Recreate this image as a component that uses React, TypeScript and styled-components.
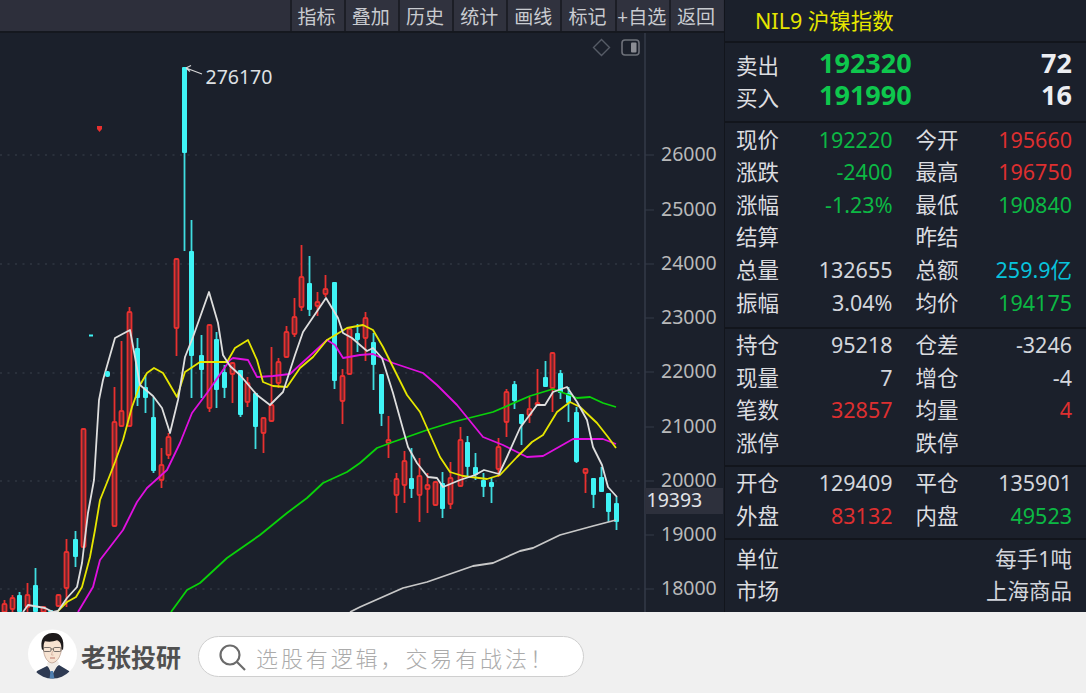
import styled, { createGlobalStyle } from 'styled-components';

// Layout constants
const CHART_WIDTH = 724;
const PAGE_WIDTH = 1086;
const TOP_HEIGHT = 612;
const PLOT_RIGHT = 645;

const UP = '#e8302f';
const DOWN = '#3ff3f5';

const FONT = `"Noto Sans", "Noto Sans CJK SC", sans-serif`;

const GlobalStyle = createGlobalStyle`
  html, body {
    margin: 0;
    padding: 0;
    background: #f0f0f0;
  }
`;

const Page = styled.div`
  width: ${PAGE_WIDTH}px;
  height: 693px;
  display: flex;
  flex-direction: column;
  overflow: hidden;
  font-family: ${FONT};
`;

const Terminal = styled.div`
  height: ${TOP_HEIGHT}px;
  display: flex;
  background: #1b202b;
`;

const ChartColumn = styled.div`
  width: ${CHART_WIDTH}px;
  display: flex;
  flex-direction: column;
`;

const Toolbar = styled.div`
  height: 31px;
  display: flex;
  justify-content: flex-end;
  gap: 2px;
  padding-right: 1px;
  background: #2d2f3b;
  border-bottom: 2px solid #15181f;
`;

const ToolButton = styled.div`
  width: 52.2px;
  box-sizing: border-box;
  padding-right: 2px;
  display: flex;
  align-items: center;
  justify-content: center;
  white-space: nowrap;
  background: #30323e;
  color: #c9cbd0;
  font-size: 19px;
  box-shadow: -2px 0 0 #1c1e26;
`;

const ChartArea = styled.div`
  position: relative;
  flex: 1;
`;

const ChartSvg = styled.svg`
  display: block;
  width: 100%;
  height: 100%;
`;

const PriceTag = styled.div`
  position: absolute;
  left: ${PLOT_RIGHT}px;
  top: 455px;
  width: 78px;
  height: 26px;
  display: flex;
  align-items: center;
  padding: 0 0 3px 1.5px;
  box-sizing: border-box;
  background: #2d303c;
  color: #e2e4e8;
  font-size: 19.5px;
  line-height: 1;
`;

const QuotePanel = styled.div`
  flex: 1;
  display: flex;
  flex-direction: column;
  border-left: 1px solid #12151c;
  color: #dcdde0;
`;

const PanelTitle = styled.div`
  height: 41px;
  box-sizing: border-box;
  display: flex;
  align-items: center;
  padding: 0 0 3px 30px;
  color: #e6e600;
  font-size: 21.5px;
  white-space: pre;
`;

const Section = styled.div<{ $top: number; $bottom: number }>`
  padding: ${p => p.$top}px 14px ${p => p.$bottom}px 11px;
  border-top: 2px solid #12151c;
`;

const DepthRow = styled.div`
  height: 32.5px;
  display: flex;
  align-items: center;
  line-height: 1;
`;

const DepthLabel = styled.span`
  width: 83px;
  padding-top: 6px;
  font-size: 21.5px;
`;

const DepthPrice = styled.span`
  flex: 1;
  font-size: 27px;
  font-weight: 700;
  color: #0ec74d;
`;

const DepthVolume = styled.span`
  font-size: 27px;
  font-weight: 700;
  color: #eceef2;
`;

const QuoteRow = styled.div`
  height: 32.6px;
  display: flex;
  gap: 23px;
  align-items: center;
  line-height: 1;
`;

const Pair = styled.div`
  flex: 1;
  display: flex;
  justify-content: space-between;
  align-items: center;
`;

const Label = styled.span`
  font-size: 21.5px;
  color: #dcdde0;
`;

const Value = styled.span<{ $color?: string }>`
  font-size: 21.5px;
  color: ${p => p.$color || '#d3d6dc'};
`;

const Footer = styled.div`
  flex: 1;
  display: flex;
  align-items: center;
  padding: 0 0 0 28px;
  background: #f0f0f0;
`;

const Avatar = styled.svg`
  width: 49px;
  height: 50px;
  flex: none;
  margin-top: 2px;
`;

const Brand = styled.span`
  width: 117px;
  margin: 6px 0 0 4px;
  font-size: 25px;
  font-weight: 700;
  color: #505050;
  white-space: nowrap;
`;

const SearchBox = styled.div`
  width: 386px;
  height: 41px;
  box-sizing: border-box;
  display: flex;
  align-items: center;
  gap: 9px;
  padding-left: 19px;
  background: #fff;
  border: 1px solid #cfcfcf;
  border-radius: 21px;
  margin-top: 8px;
`;

const SearchText = styled.span`
  font-size: 22px;
  letter-spacing: 2.9px;
  font-weight: 300;
  color: #ababab;
  white-space: nowrap;
`;

const TOOLS = ['指标', '叠加', '历史', '统计', '画线', '标记', '+自选', '返回'];

const GREEN = '#0cb844';
const RED = '#dd2f30';

type Cell = { label: string; value?: string; color?: string };

const MAIN_ROWS: [Cell, Cell][] = [
  [{ label: '现价', value: '192220', color: GREEN }, { label: '今开', value: '195660', color: RED }],
  [{ label: '涨跌', value: '-2400', color: GREEN }, { label: '最高', value: '196750', color: RED }],
  [{ label: '涨幅', value: '-1.23%', color: GREEN }, { label: '最低', value: '190840', color: GREEN }],
  [{ label: '结算' }, { label: '昨结' }],
  [{ label: '总量', value: '132655' }, { label: '总额', value: '259.9亿', color: '#08c3dc' }],
  [{ label: '振幅', value: '3.04%' }, { label: '均价', value: '194175', color: GREEN }],
];

const HOLD_ROWS: [Cell, Cell][] = [
  [{ label: '持仓', value: '95218' }, { label: '仓差', value: '-3246' }],
  [{ label: '现量', value: '7' }, { label: '增仓', value: '-4' }],
  [{ label: '笔数', value: '32857', color: RED }, { label: '均量', value: '4', color: RED }],
  [{ label: '涨停' }, { label: '跌停' }],
];

const TRADE_ROWS: [Cell, Cell][] = [
  [{ label: '开仓', value: '129409' }, { label: '平仓', value: '135901' }],
  [{ label: '外盘', value: '83132', color: RED }, { label: '内盘', value: '49523', color: GREEN }],
];

// x, wick top, wick bottom, body top, body bottom, up (red) or down (cyan)
type Candle = [number, number, number, number, number, 0 | 1];

const CANDLES: Candle[] = [
  [5, 600, 612, 604, 612, 1], [12.5, 595, 612, 598, 609, 1], [20, 592, 612, 595, 612, 0],
  [28, 583, 612, 595, 607, 1], [36, 568, 612, 585, 612, 0], [43.5, 607, 612, 607, 612, 1],
  [51, 610, 612, 610, 612, 0], [59, 594, 607, 595, 606, 1], [67, 539, 607, 552, 588, 1],
  [76, 531, 567, 539, 557, 0], [84, 429, 547, 429, 547, 1], [115, 387, 526, 422, 526, 1],
  [122, 341, 426, 411, 426, 1], [130, 307, 426, 312, 426, 1], [138, 338, 406, 348, 398, 0],
  [146, 375, 413, 387, 398, 0], [154, 397, 473, 417, 471, 0], [161.5, 448, 488, 465, 480, 1],
  [169, 433, 459, 437, 455, 1], [177, 259, 356, 259, 328, 1], [185, 67, 251, 67, 153, 0],
  [192, 220, 398, 251, 356, 0], [202, 335, 398, 355, 370, 0], [209.5, 325, 412, 325, 408, 1],
  [217, 332, 408, 339, 390, 0], [225, 365, 398, 372, 388, 0], [233, 363, 403, 363, 374, 1],
  [240.5, 370, 417, 370, 415, 0], [248, 377, 407, 383, 402, 1], [256, 393, 449, 393, 427, 0],
  [264, 418, 453, 418, 433, 1], [271.5, 347, 421, 405, 421, 1], [279, 358, 388, 362, 383, 1],
  [287, 326, 357, 332, 357, 1], [294.5, 298, 337, 317, 334, 1], [302, 245, 311, 277, 307, 1],
  [310, 256, 316, 283, 310, 0], [318, 292, 316, 302, 306, 1], [326, 275, 297, 289, 294, 1],
  [335, 282, 389, 282, 381, 0], [343, 369, 424, 376, 401, 1], [350, 329, 374, 329, 374, 1],
  [358, 324, 352, 333, 340, 0], [366, 312, 361, 318, 338, 1], [374, 333, 390, 342, 365, 0],
  [381.5, 374, 426, 374, 414, 0], [389, 416, 458, 440, 443, 1], [397, 473, 513, 479, 495, 1],
  [405, 451, 503, 461, 485, 1], [412, 448, 498, 478, 489, 0], [420, 458, 522, 476, 495, 1],
  [428, 473, 513, 485, 489, 1], [436, 482, 506, 482, 505, 1], [443, 472, 518, 483, 509, 0],
  [451, 462, 509, 478, 504, 1], [461, 427, 486, 440, 486, 1], [468, 436, 477, 442, 467, 0],
  [476, 453, 480, 467, 475, 0], [484, 473, 497, 480, 487, 0], [492, 477, 503, 482, 487, 0],
  [499, 438, 477, 447, 469, 1], [507, 389, 437, 392, 422, 1], [515, 381, 409, 384, 401, 0],
  [522, 414, 445, 414, 424, 0], [530, 397, 423, 409, 415, 1], [538, 369, 405, 403, 405, 1],
  [546, 361, 387, 377, 387, 0], [553, 353, 412, 353, 388, 1], [561, 370, 399, 373, 393, 0],
  [569, 387, 422, 393, 403, 0], [577, 407, 463, 412, 462, 0], [586, 469, 493, 469, 473, 1],
  [594, 478, 508, 478, 495, 0], [602, 467, 492, 477, 492, 0], [609, 493, 522, 493, 512, 0],
  [617, 497, 530, 503, 522, 0],
];

const MA_WHITE = '23,612 28,605 45,608 53,612 58,611 67,598 77,587 82,563 88,513 94,480 99,400 103,380 115,338 130,330 135,357 140,385 153,396 162,408 170,433 178,400 185,357 193,337 209,292 218,323 223,355 230,366 240,375 257,395 270,405 283,392 295,355 303,332 326,298 338,318 343,333 352,338 360,345 367,351 373,348 382,358 393,393 408,447 417,463 428,477 437,478 443,487 460,480 475,475 484,470 499,474 507,457 520,428 537,405 545,405 553,392 567,387 577,402 587,420 593,447 602,465 608,487 617,497';
const MA_YELLOW = '57,612 67,602 76,597 82,587 90,557 95,530 100,500 108,480 115,462 123,440 132,407 140,385 147,373 154,368 163,373 177,397 185,372 200,362 227,362 235,348 248,340 257,360 263,382 273,386 287,387 300,368 313,357 327,340 347,328 363,325 373,330 383,347 407,395 420,412 440,457 450,472 463,476 487,479 500,475 517,457 532,442 543,435 557,412 570,402 580,407 597,423 608,437 616,448';
const MA_MAGENTA = '78,612 93,587 100,560 110,547 123,530 137,502 147,488 167,470 180,443 192,413 207,393 230,360 233,358 248,360 257,377 273,376 290,374 313,353 327,340 335,345 343,358 360,355 373,354 393,363 423,373 437,385 457,405 483,437 503,445 527,457 543,456 573,439 603,439 616,444';
const MA_GREEN = '171,612 187,590 200,583 227,558 260,535 287,513 307,498 323,483 347,472 360,463 377,448 393,442 427,430 453,422 493,412 530,396 553,389 577,398 590,397 603,403 616,407';
const MA_GRAY = '350,612 360,607 403,588 427,582 473,566 493,563 520,551 533,548 560,535 593,526 616,520';

const GRID_LINES = [155, 264, 373, 481, 589];
const AXIS_LABELS: [string, number][] = [
  ['26000', 155], ['25000', 210], ['24000', 264], ['23000', 318], ['22000', 372],
  ['21000', 427], ['20000', 481], ['19000', 535], ['18000', 589],
];

const CandleMark = ({ candle }: { candle: Candle }) => {
  const [x, wickTop, wickBottom, bodyTop, bodyBottom, up] = candle;
  // snap to whole pixels so the hollow bodies stay crisp
  const px = Math.floor(x - 0.25);
  return (
    <g>
      <line x1={px + 0.5} x2={px + 0.5} y1={wickTop} y2={wickBottom} stroke={up ? UP : '#3fdde0'} strokeWidth={1.8} />
      {up ? (
        <rect
          x={px - 1.5}
          y={bodyTop}
          width={4}
          height={Math.max(bodyBottom - bodyTop, 2)}
          rx={1}
          fill="#6a2730"
          stroke={UP}
          strokeWidth={1.8}
        />
      ) : (
        <rect x={px - 2} y={bodyTop} width={5} height={bodyBottom - bodyTop} rx={1} fill={DOWN} />
      )}
    </g>
  );
};

const MaLine = styled.polyline<{ $color: string }>`
  fill: none;
  stroke: ${p => p.$color};
  stroke-width: 1.8;
  stroke-linejoin: round;
`;

const Chart = () => (
  <ChartSvg viewBox={`0 33 ${CHART_WIDTH} ${TOP_HEIGHT - 33}`}>
    {GRID_LINES.map(y => (
      <line key={y} x1={0} x2={PLOT_RIGHT} y1={y} y2={y} stroke="#3b404c" strokeWidth={1} strokeDasharray="2 5.5" />
    ))}
    <line x1={PLOT_RIGHT} x2={PLOT_RIGHT} y1={33} y2={TOP_HEIGHT} stroke="#353a48" strokeWidth={1.5} />
    {AXIS_LABELS.map(([text, y]) => (
      <g key={text}>
        <line x1={PLOT_RIGHT} x2={654} y1={y} y2={y} stroke="#353a48" strokeWidth={1} />
        <text x={661} y={y + 6} fontSize={19.5} fill="#b8b9ba" fontFamily={FONT}>{text}</text>
      </g>
    ))}

    {/* diamond and panel toggle */}
    <path d="M601.5 39.5 L609.5 47.5 L601.5 55.5 L593.5 47.5 Z" fill="none" stroke="#565b66" strokeWidth={1.4} />
    <rect x={622} y={40} width={17} height={15} rx={3} fill="none" stroke="#6e717a" strokeWidth={1.6} />
    <rect x={631} y={42.5} width={5.5} height={10} rx={1} fill="#8b8d94" />

    {CANDLES.map(c => <CandleMark key={c[0]} candle={c} />)}

    <MaLine points={MA_GRAY} $color="#c8c8c8" />
    <MaLine points={MA_GREEN} $color="#0ad20a" />
    <MaLine points={MA_MAGENTA} $color="#e010e0" />
    <MaLine points={MA_YELLOW} $color="#e6e600" />
    <MaLine points={MA_WHITE} $color="#dedede" />

    {/* high point note */}
    <path d="M186 68 L202 74 M186 68 L191 65.5 M186 68 L190 71.5" fill="none" stroke="#d8d8d8" strokeWidth={1.2} />
    <text x={205.5} y={84} fontSize={19.5} fill="#dfe1e4" fontFamily={FONT}>276170</text>

    {/* stray marks */}
    <path d="M97 126 h5 v3 l-2.5 3 l-2.5 -3 Z" fill={UP} />
    <rect x={89} y={334.5} width={4} height={2} fill={DOWN} />
    <rect x={105} y={371} width={5} height={6} rx={2} fill={DOWN} />
  </ChartSvg>
);

const PortraitAvatar = () => (
  <Avatar viewBox="0 0 49 50">
    <defs>
      <clipPath id="avatar-clip">
        <circle cx="24.5" cy="25" r="24.5" />
      </clipPath>
    </defs>
    <circle cx="24.5" cy="25" r="24.5" fill="#fff" />
    <g clipPath="url(#avatar-clip)">
      <path d="M5 50 L9 42 L19 37 L24 41 L31 36 L41 42 L45 50 Z" fill="#2e3a52" />
      <path d="M19 35 L24 46 L31 34 L28 30 H21 Z" fill="#f1ece6" />
      <path d="M22.5 42 L25 42 L26.5 50 L21.5 50 Z" fill="#4f7fb0" />
      <path d="M15 14 C15 26 18 33 24 34 C30 33 34 26 34 14 C30 10 20 10 15 14 Z" fill="#f7e3d2" stroke="#a98a78" strokeWidth={0.6} />
      <path d="M14 21 C12 11 15 5 24 4 C32 3 37 9 35 21 L33.5 20 C33.5 15 32 12 29 11 C25 13 20 13 17 12 C15.5 14 15.5 17 15.5 20 Z" fill="#1d1a1b" />
      <rect x="15.5" y="18.5" width="7.5" height="4" rx="1.2" fill="none" stroke="#55504f" strokeWidth={0.8} />
      <rect x="25.5" y="18.5" width="7.5" height="4" rx="1.2" fill="none" stroke="#55504f" strokeWidth={0.8} />
      <path d="M23 20 H25.5" stroke="#55504f" strokeWidth={0.8} />
      <path d="M22 29 H27" stroke="#b3695f" strokeWidth={0.9} />
      <path d="M24.5 22 L23.5 26 H25.5" fill="none" stroke="#c49a86" strokeWidth={0.6} />
    </g>
  </Avatar>
);

const SearchGlyph = () => (
  <svg width="29" height="28" viewBox="0 0 29 28" fill="none" stroke="#6b6b6b">
    <circle cx="12" cy="12" r="9.5" strokeWidth={2.2} />
    <path d="M19 19 L27 27" strokeWidth={2.2} />
  </svg>
);

const QuotePair = ({ cell }: { cell: Cell }) => (
  <Pair>
    <Label>{cell.label}</Label>
    {cell.value && <Value $color={cell.color}>{cell.value}</Value>}
  </Pair>
);

const QuoteRows = ({ rows }: { rows: [Cell, Cell][] }) => (
  <>
    {rows.map(([left, right]) => (
      <QuoteRow key={left.label}>
        <QuotePair cell={left} />
        <QuotePair cell={right} />
      </QuoteRow>
    ))}
  </>
);

const App = () => (
  <Page>
    <GlobalStyle />
    <Terminal>
      <ChartColumn>
        <Toolbar>
          {TOOLS.map(tool => <ToolButton key={tool}>{tool}</ToolButton>)}
        </Toolbar>
        <ChartArea>
          <Chart />
          <PriceTag>19393</PriceTag>
        </ChartArea>
      </ChartColumn>

      <QuotePanel>
        <PanelTitle>NIL9 沪镍指数</PanelTitle>
        <Section $top={3} $bottom={10}>
          <DepthRow>
            <DepthLabel>卖出</DepthLabel>
            <DepthPrice>192320</DepthPrice>
            <DepthVolume>72</DepthVolume>
          </DepthRow>
          <DepthRow>
            <DepthLabel>买入</DepthLabel>
            <DepthPrice>191990</DepthPrice>
            <DepthVolume>16</DepthVolume>
          </DepthRow>
        </Section>
        <Section $top={0} $bottom={8}>
          <QuoteRows rows={MAIN_ROWS} />
        </Section>
        <Section $top={0} $bottom={6}>
          <QuoteRows rows={HOLD_ROWS} />
        </Section>
        <Section $top={0} $bottom={6}>
          <QuoteRows rows={TRADE_ROWS} />
        </Section>
        <Section $top={2} $bottom={0}>
          <QuoteRow>
            <Pair>
              <Label>单位</Label>
              <Value>每手1吨</Value>
            </Pair>
          </QuoteRow>
          <QuoteRow>
            <Pair>
              <Label>市场</Label>
              <Value>上海商品</Value>
            </Pair>
          </QuoteRow>
        </Section>
      </QuotePanel>
    </Terminal>

    <Footer>
      <PortraitAvatar />
      <Brand>老张投研</Brand>
      <SearchBox>
        <SearchGlyph />
        <SearchText>选股有逻辑，交易有战法！</SearchText>
      </SearchBox>
    </Footer>
  </Page>
);

export default App;
